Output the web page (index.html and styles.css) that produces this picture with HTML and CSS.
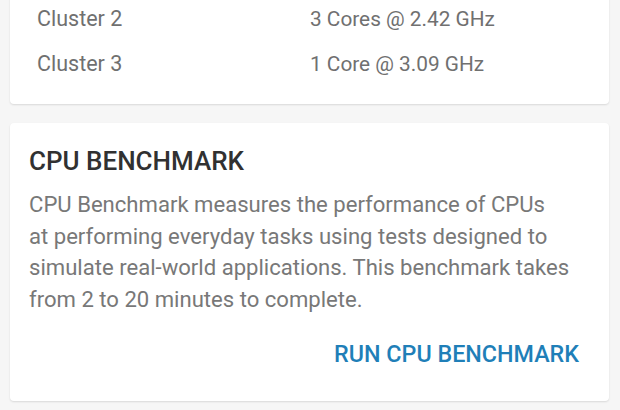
FILE: index.html
```html
<!DOCTYPE html>
<html>
<head>
<meta charset="utf-8">
<link rel="stylesheet" href="styles.css">
</head>
<body>
<div class="page">
  <section class="card info">
    <div class="row"><span class="label">Cluster 2</span><span class="value">3 Cores @ 2.42 GHz</span></div>
    <div class="row"><span class="label">Cluster 3</span><span class="value">1 Core @ 3.09 GHz</span></div>
  </section>
  <section class="card bench">
    <h2 class="title">CPU BENCHMARK</h2>
    <p class="desc">CPU Benchmark measures the performance of CPUs<br>at performing everyday tasks using tests designed to<br>simulate real-world applications. This benchmark takes<br>from 2 to 20 minutes to complete.</p>
    <div class="actions"><span class="btn">RUN CPU BENCHMARK</span></div>
  </section>
</div>
</body>
</html>
```
FILE: styles.css
```css
html, body { margin: 0; padding: 0; }
body {
  background: #f6f6f6;
  font-family: Roboto, "Noto Sans", sans-serif;
  width: 620px;
  height: 410px;
  overflow: hidden;
}
.page {
  display: flex;
  flex-direction: column;
  gap: 19px;
  padding: 0 11px 0 10px;
  margin-top: -20px;
}
.card {
  background: #fff;
  border-radius: 4px;
  box-shadow: 0 1px 2px rgba(0,0,0,0.12);
}
.info {
  box-sizing: border-box;
  height: 124px;
  padding: 16px 0 0 27px;
}
.row {
  display: flex;
  height: 45px;
  align-items: center;
  font-size: 21.5px;
  color: #707070;
}
.label { width: 273px; }
.value { font-size: 20.8px; }
.bench {
  padding: 22px 30px 0 19px;
  height: 278px;
  box-sizing: border-box;
}
.title {
  margin: 0;
  font-size: 26px;
  font-weight: 500;
  color: #313131;
  line-height: 32px;
}
.desc {
  margin: 12px 0 0;
  font-size: 22.1px;
  line-height: 31.5px;
  color: #787878;
  white-space: nowrap;
}
.actions {
  display: flex;
  justify-content: flex-end;
  margin-top: 25px;
}
.btn {
  font-size: 23.3px;
  font-weight: 500;
  color: #1f7fb8;
  line-height: 28px;
}
```
